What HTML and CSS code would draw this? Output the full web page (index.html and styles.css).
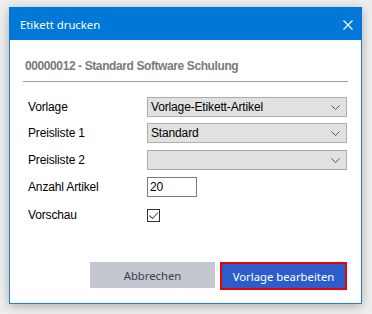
FILE: index.html
```html
<!DOCTYPE html>
<html lang="de">
<head>
    <meta charset="UTF-8">
    <title>Etikett drucken</title>
    <link rel="stylesheet" href="styles.css">
</head>
<body>

    <div class="dialog">
        <div class="titlebar">
            <span class="titlebar-text">Etikett drucken</span>
            <svg class="close-icon" width="10" height="10" viewBox="0 0 10 10">
                <path d="M0.5 0.5 L9.5 9.5 M9.5 0.5 L0.5 9.5" stroke="#ffffff" stroke-width="1.2" fill="none"/>
            </svg>
        </div>

        <div class="dialog-body">
            <h2 class="record-title">00000012 - Standard Software Schulung</h2>

            <div class="form">
                <div class="field-row first-row">
                    <label>Vorlage</label>
                    <div class="combo">
                        <span>Vorlage-Etikett-Artikel</span>
                        <svg class="chevron" width="9" height="5" viewBox="0 0 9 5"><path d="M0.5 0.5 L4.5 4.5 L8.5 0.5" stroke="#555" fill="none"/></svg>
                    </div>
                </div>
                <div class="field-row">
                    <label>Preisliste 1</label>
                    <div class="combo">
                        <span>Standard</span>
                        <svg class="chevron" width="9" height="5" viewBox="0 0 9 5"><path d="M0.5 0.5 L4.5 4.5 L8.5 0.5" stroke="#555" fill="none"/></svg>
                    </div>
                </div>
                <div class="field-row">
                    <label>Preisliste 2</label>
                    <div class="combo">
                        <span></span>
                        <svg class="chevron" width="9" height="5" viewBox="0 0 9 5"><path d="M0.5 0.5 L4.5 4.5 L8.5 0.5" stroke="#555" fill="none"/></svg>
                    </div>
                </div>
                <div class="field-row">
                    <label>Anzahl Artikel</label>
                    <div class="textbox">20</div>
                </div>
                <div class="field-row check-row">
                    <label>Vorschau</label>
                    <div class="checkbox">
                        <svg width="11" height="11" viewBox="0 0 11 11"><path d="M1.5 5.5 L4.5 8.5 L10 2.5" stroke="#555" stroke-width="1.1" fill="none"/></svg>
                    </div>
                </div>
            </div>

            <div class="button-row">
                <button class="btn btn-cancel">Abbrechen</button>
                <button class="btn btn-primary">Vorlage bearbeiten</button>
            </div>
        </div>
    </div>

</body>
</html>
```

FILE: styles.css
```css
:root {
    --title-blue: #0078d7;
    --frame-blue: #1883d7;
    --combo-bg: #e1e1e1;
    --combo-border: #adadad;
    --heading-grey: #7a7a7a;
    --cancel-bg: #c4c6d0;
    --cancel-text: #3d3d4c;
    --primary-bg: #2b5ecc;
    --focus-red: #ee0000;
}

body, html {
    margin: 0;
    padding: 0;
    height: 100%;
    background-color: #eeeeee;
}

body {
    padding: 7px 0 0 9px;
    box-sizing: border-box;
    font-family: "Liberation Sans", Arial, sans-serif;
    font-size: 12px;
    color: #000000;
}

.dialog {
    width: 353px;
    height: 297px;
    box-sizing: border-box;
    border: 1px solid var(--frame-blue);
    background-color: #ffffff;
    box-shadow: 0 2px 10px rgba(0, 0, 0, 0.28);
    display: flex;
    flex-direction: column;
}

.titlebar {
    height: 32px;
    flex: none;
    background-color: var(--title-blue);
    display: flex;
    align-items: center;
    justify-content: space-between;
    padding: 1px 9px 0 11px;
    margin: -1px -1px 0 -1px;
}

.titlebar-text {
    font-family: "Noto Sans", "Open Sans", sans-serif;
    font-size: 11.3px;
    color: #ffffff;
}

.close-icon {
    display: block;
    margin-top: 1px;
}

.dialog-body {
    flex: 1;
    display: flex;
    flex-direction: column;
    padding: 0 13px 13px 13px;
}

.record-title {
    margin: 18px 0 0 0;
    padding: 0 2px 7px 2px;
    line-height: 16px;
    font-size: 12px;
    font-weight: bold;
    letter-spacing: -0.4px;
    color: var(--heading-grey);
    border-bottom: 1px solid #a0a0a0;
}

.form {
    margin-top: 15px;
    display: flex;
    flex-direction: column;
    gap: 7px;
}

.field-row {
    display: grid;
    grid-template-columns: 119px 1fr;
    align-items: center;
    height: 20px;
    padding-left: 5px;
    letter-spacing: -0.15px;
}

.first-row {
    margin-bottom: -1px;
}

.check-row {
    margin-top: 1px;
}

.combo {
    height: 20px;
    box-sizing: border-box;
    width: 200px;
    border: 1px solid var(--combo-border);
    background-color: var(--combo-bg);
    display: flex;
    align-items: center;
    justify-content: space-between;
    padding: 0 6px 0 3px;
}

.chevron {
    display: block;
}

.textbox {
    width: 50px;
    height: 20px;
    box-sizing: border-box;
    border: 1px solid #7a7a7a;
    padding-left: 2px;
    line-height: 18px;
}

.checkbox {
    width: 13px;
    height: 13px;
    box-sizing: border-box;
    border: 1px solid #333333;
    display: flex;
    align-items: center;
    justify-content: center;
}

.button-row {
    margin-top: auto;
    display: flex;
    justify-content: flex-end;
    align-items: flex-start;
    gap: 5px;
    padding-right: 1px;
}

.btn {
    font-family: "Noto Sans", "Open Sans", sans-serif;
    font-size: 11.3px;
    border: none;
    padding: 0;
    cursor: pointer;
}

.btn-cancel {
    width: 125px;
    height: 26px;
    background-color: var(--cancel-bg);
    color: var(--cancel-text);
}

.btn-primary {
    width: 127px;
    height: 28px;
    background-color: var(--primary-bg);
    color: #ffffff;
    border: 2px solid var(--focus-red);
}
```
